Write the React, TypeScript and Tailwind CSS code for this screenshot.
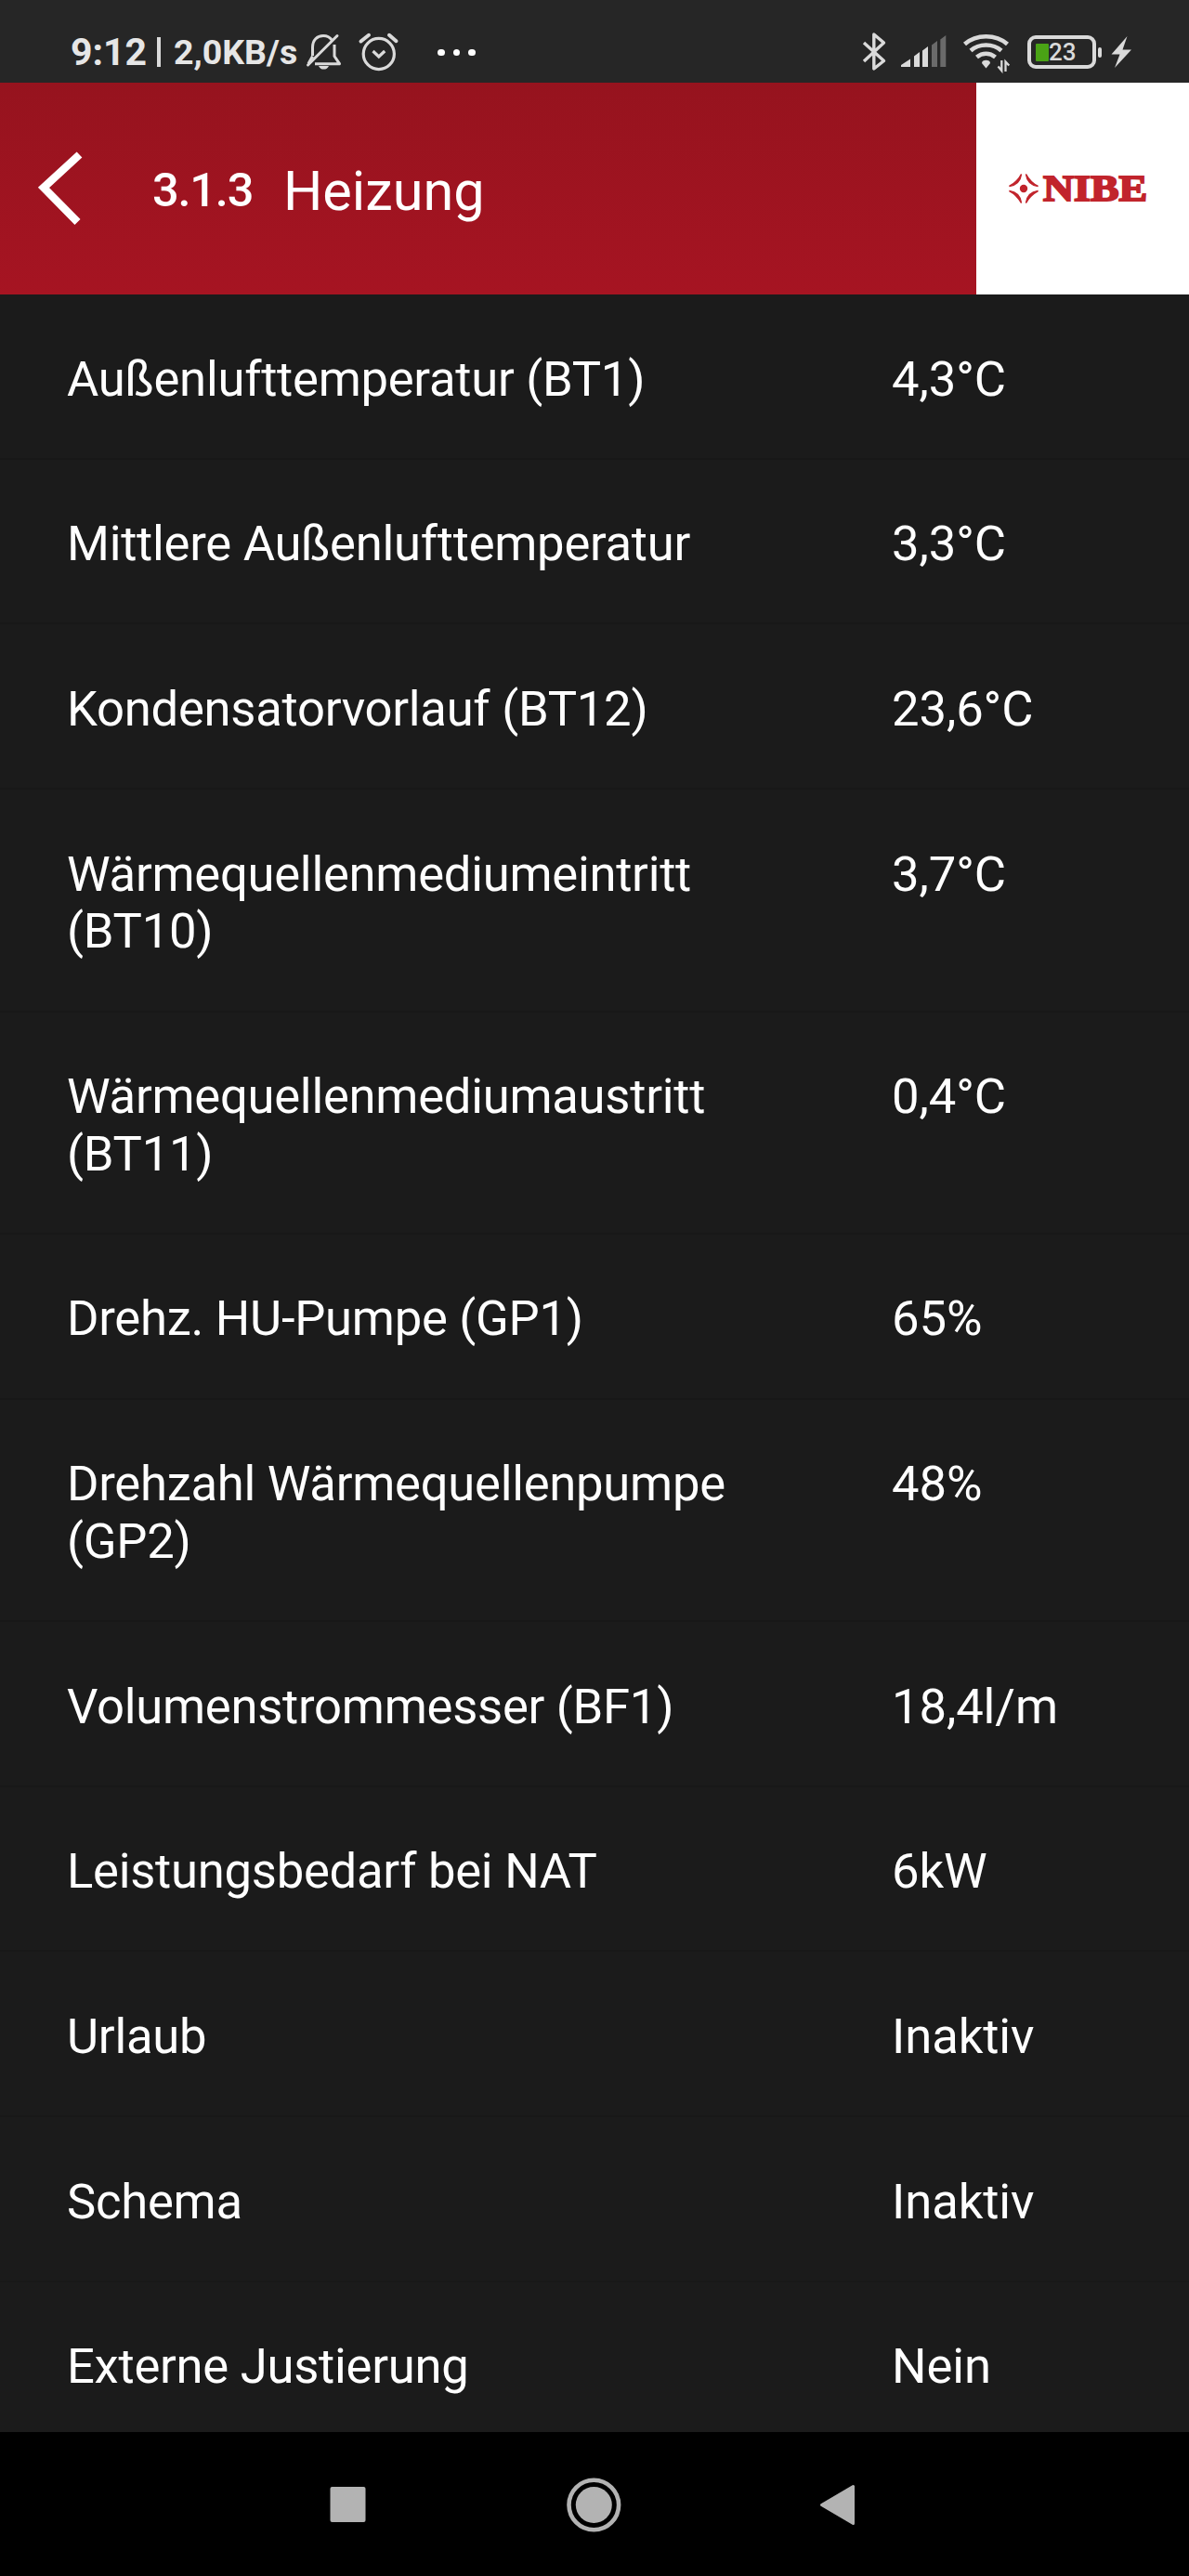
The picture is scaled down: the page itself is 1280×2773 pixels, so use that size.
const readings = [
  { label: "Außenlufttemperatur (BT1)", value: "4,3°C" },
  { label: "Mittlere Außenlufttemperatur", value: "3,3°C" },
  { label: "Kondensatorvorlauf (BT12)", value: "23,6°C" },
  { label: "Wärmequellenmediumeintritt (BT10)", value: "3,7°C" },
  { label: "Wärmequellenmediumaustritt (BT11)", value: "0,4°C" },
  { label: "Drehz. HU-Pumpe (GP1)", value: "65%" },
  { label: "Drehzahl Wärmequellenpumpe (GP2)", value: "48%" },
  { label: "Volumenstrommesser (BF1)", value: "18,4l/m" },
  { label: "Leistungsbedarf bei NAT", value: "6kW" },
  { label: "Urlaub", value: "Inaktiv" },
  { label: "Schema", value: "Inaktiv" },
  { label: "Externe Justierung", value: "Nein" },
];

function BellOffIcon() {
  return (
    <svg width="45" height="48" viewBox="0 0 45 48" fill="none" stroke="currentColor" strokeWidth="3">
      <path d="M10.5 28V19C10.5 11 15.5 6.5 22 6.5C26 6.5 29.5 8.3 31.5 11.5" />
      <path d="M34 16V28.5L39.5 36.7H13" strokeLinejoin="round" />
      <path d="M6 36.5L10.5 28.5" />
      <path d="M5.5 38L37 6.5" strokeLinecap="round" />
      <path d="M17 39H28C27 41.5 25 42.6 22.5 42.6S18 41.5 17 39Z" fill="currentColor" stroke="none" />
    </svg>
  );
}

function AlarmIcon() {
  return (
    <svg width="47" height="48" viewBox="0 0 47 48" fill="none" stroke="currentColor" strokeLinecap="round">
      <circle cx="23.8" cy="26" r="16.6" strokeWidth="3.2" />
      <path d="M17.5 23L23.8 29L30.2 23" strokeWidth="3.2" strokeLinecap="butt" />
      <path d="M4.5 12.5L13 5.8M35 5.8L42.5 12.2" strokeWidth="4" />
    </svg>
  );
}

function BluetoothIcon() {
  return (
    <svg width="30" height="48" viewBox="0 0 30 48" fill="none" stroke="currentColor" strokeWidth="3.4">
      <path d="M4 14L25.5 33.5L14.8 42V5L25.5 14L4 34" strokeLinejoin="round" />
    </svg>
  );
}

function SignalIcon() {
  return (
    <svg width="50" height="48" viewBox="0 0 50 48" fill="currentColor">
      <path d="M0 40V38L10 31.5V40ZM14 40V28.5L20 24V40ZM23 40V22.5L29 18V40Z" />
      <path d="M33 40V16.5L39 12V40ZM42.3 40V10.5L48.3 6V40Z" opacity="0.38" />
    </svg>
  );
}

function WifiIcon() {
  return (
    <svg width="52" height="48" viewBox="0 0 52 48" fill="none" stroke="currentColor" strokeWidth="4.6">
      <path d="M2.5 15.5C15 4.5 36 4.5 48.5 15.5" />
      <path d="M9 22.5C18 14.5 33 14.5 42 22.5" />
      <path d="M15.5 29.5C21.5 24.5 29.5 24.5 35.5 29.5" />
      <path d="M21 36C21 33.5 23 32.8 25.5 32.8S30 33.5 30 36L25.5 41.5Z" fill="currentColor" stroke="none" />
      <path d="M42.3 33V44L38.5 39.5M46.5 45V34.5L50.3 38.5" strokeWidth="2.3" />
    </svg>
  );
}

function Battery() {
  return (
    <div className="ml-[18px] flex items-center">
      <div className="flex h-9 w-[74px] items-center rounded-[9px] border-4 border-current pl-[5px]">
        <div className="h-[19px] w-[14px] shrink-0 rounded-[1px] bg-[#4aa315]" />
        <span className="text-[26px] leading-none font-medium">23</span>
      </div>
      <div className="ml-[2px] h-[11px] w-[4px] rounded-full bg-current" />
      <svg className="ml-[10px]" width="23" height="36" viewBox="0 0 23 36" fill="currentColor">
        <path d="M17.5 1L0.5 20.5L9.5 20.5L4 35L22 15.5L12.5 15.5Z" />
      </svg>
    </div>
  );
}

function StatusBar() {
  return (
    <div className="flex h-[88.5px] items-center bg-[#262626] pt-[32px] pb-[8px] text-[#dadada]">
      <span className="ml-[76px] w-[93px] text-[41px] font-bold leading-[48px] text-[#e6e6e6]">9:12</span>
      <span className="h-8 w-1 bg-current" />
      <span className="ml-[14px] w-[139px] text-[37.5px] font-bold leading-[48px] whitespace-nowrap text-[#e6e6e6]">
        2,0KB/s
      </span>
      <BellOffIcon />
      <div className="ml-[13px]">
        <AlarmIcon />
      </div>
      <div className="ml-[40px] flex gap-[9px]">
        <span className="size-[7.5px] rounded-full bg-white" />
        <span className="size-[7.5px] rounded-full bg-white" />
        <span className="size-[7.5px] rounded-full bg-white" />
      </div>
      <div className="mr-[61px] ml-auto flex items-center">
        <BluetoothIcon />
        <div className="ml-[14px]">
          <SignalIcon />
        </div>
        <div className="ml-[16px]">
          <WifiIcon />
        </div>
        <Battery />
      </div>
    </div>
  );
}

function NibeLogo() {
  return (
    <svg width="160" height="60" viewBox="0 -12 160 60" fill="#c1242c">
      <circle cx="17" cy="18" r="4.2" />
      {[0, 90, 180, 270].map((angle) => (
        <path
          key={angle}
          d="M14.5 2.5C13.5 10 9 14.5 1.5 15.5C7 12.5 11.5 8.5 14.5 2.5Z"
          stroke="#c1242c"
          strokeWidth="1.5"
          transform={`rotate(${angle} 17 18)`}
        />
      ))}
      <text
        x="38"
        y="30.5"
        fontFamily="Liberation Serif, serif"
        fontWeight="700"
        fontSize="39.5"
        stroke="#c1242c"
        strokeWidth="2"
        textLength="112"
        lengthAdjust="spacingAndGlyphs"
      >
        NIBE
      </text>
    </svg>
  );
}

function Header() {
  return (
    <header className="flex h-[228.5px] bg-linear-to-b from-[#96131e] to-[#a61422]">
      <div className="flex flex-1 items-center text-white">
        <svg className="ml-[39px] shrink-0" width="52" height="84" viewBox="0 0 52 84" fill="none">
          <path d="M46.5 5.5L8 41L44.5 78" stroke="currentColor" strokeWidth="8.5" />
        </svg>
        <span className="mt-[5px] ml-[73px] w-[141px] text-[50.5px] font-medium leading-none tracking-[-1.2px]">
          3.1.3
        </span>
        <h1 className="mt-[7px] text-[59.4px] leading-none">Heizung</h1>
      </div>
      <div className="flex w-[229px] items-center bg-white pl-[34px]">
        <NibeLogo />
      </div>
    </header>
  );
}

function NavBar() {
  return (
    <nav className="h-[155px] bg-black text-[#b3b3b3]">
      <svg width="1280" height="155" viewBox="0 0 1280 155" fill="currentColor">
        <rect x="355.5" y="59" width="38" height="38" rx="2" />
        <circle cx="639.3" cy="78.5" r="19.5" />
        <circle cx="639.3" cy="78.5" r="26.8" fill="none" stroke="currentColor" strokeWidth="4.6" />
        <path d="M884.5 78.5L918.5 58.5V98.5Z" stroke="currentColor" strokeWidth="3" strokeLinejoin="round" />
      </svg>
    </nav>
  );
}

export default function App() {
  return (
    <div className="flex h-[2773px] w-[1280px] flex-col overflow-hidden bg-[#1b1b1b] font-[Roboto,sans-serif]">
      <StatusBar />
      <Header />
      <main className="min-h-0 flex-1 overflow-hidden">
        {readings.map((reading) => (
          <div
            key={reading.label}
            className="flex border-b-2 border-[#181818] pt-[60.6px] pb-[53.55px] pl-[72px] text-[52.6px] leading-[61.6px] text-white"
          >
            <span className="w-[740px] tracking-[-0.27px]">{reading.label}</span>
            <span className="ml-[148px] tracking-[-0.1px]">{reading.value}</span>
          </div>
        ))}
      </main>
      <NavBar />
    </div>
  );
}
